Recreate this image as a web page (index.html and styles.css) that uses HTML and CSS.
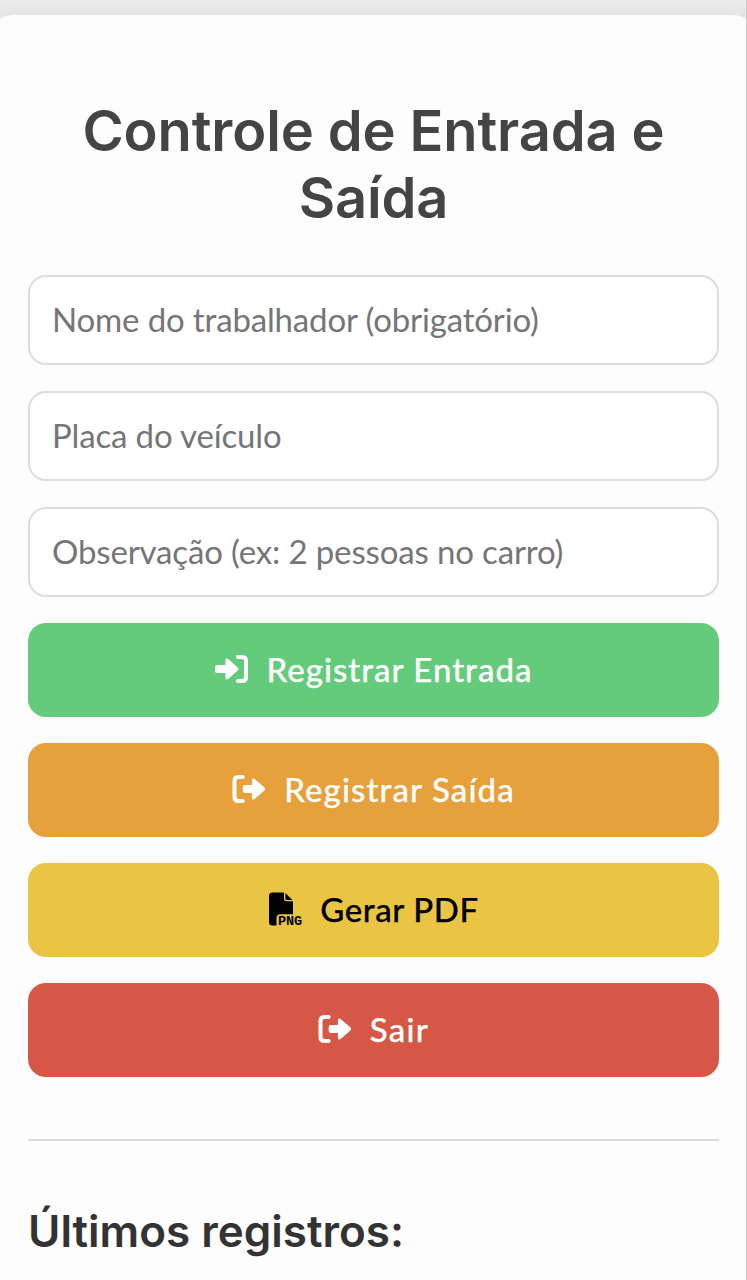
FILE: index.html
```html
<!DOCTYPE html>
<html lang="pt-BR">
<head>
<meta charset="utf-8">
<title>Controle de Entrada e Saída</title>
<link rel="stylesheet" href="styles.css">
</head>
<body>
<svg width="0" height="0" class="sprite">
  <symbol id="leave" viewBox="0 0 34 32">
    <path class="bracket" d="M10.7 4H6.5Q2.5 4 2.5 8V24Q2.5 28 6.5 28H10.7"/>
    <path class="arrow" d="M13 12.6H20.5V7.6Q20.5 5 22.8 7L31.8 14.8Q33.2 16 31.8 17.2L22.8 25Q20.5 27 20.5 24.4V19.4H13Q11.3 19.4 11.3 17.7V14.3Q11.3 12.6 13 12.6Z"/>
  </symbol>
</svg>
<main class="card">
  <h1 class="title">Controle de Entrada e Saída</h1>
  <form class="form">
    <input class="field name" type="text" placeholder="Nome do trabalhador (obrigatório)">
    <input class="field plate" type="text" placeholder="Placa do veículo">
    <input class="field note" type="text" placeholder="Observação (ex: 2 pessoas no carro)">
    <button class="btn enter" type="button">
      <svg class="icon" viewBox="0 0 34 32"><path class="bracket" d="M23 4H27Q31 4 31 8V24Q31 28 27 28H23"/><path class="arrow" d="M2.3 12.6H11V7.6Q11 5 13.3 7L22 14.8Q23.4 16 22 17.2L13.3 25Q11 27 11 24.4V19.4H2.3Q.6 19.4 .6 17.7V14.3Q.6 12.6 2.3 12.6Z"/></svg>
      <span>Registrar Entrada</span>
    </button>
    <button class="btn exit" type="button">
      <svg class="icon"><use href="#leave"/></svg>
      <span>Registrar Saída</span>
    </button>
    <button class="btn pdf" type="button">
      <svg class="icon file" viewBox="0 0 34 34"><path d="M4.5 .5H16V7Q16 9.3 18.4 9.3H25V22.2H12.5Q8.5 22.2 8.5 26.2V33.5H4.5Q1 33.5 1 30V4Q1 .5 4.5 .5ZM17.4 1L24.4 7.9H18.6Q17.4 7.9 17.4 6.5Z"/><text class="filetype" x="10" y="33" textLength="24" lengthAdjust="spacing">PNG</text></svg>
      <span>Gerar PDF</span>
    </button>
    <button class="btn quit" type="button">
      <svg class="icon"><use href="#leave"/></svg>
      <span>Sair</span>
    </button>
  </form>
  <hr class="rule">
  <h2 class="subtitle">Últimos registros:</h2>
</main>
</body>
</html>
```
FILE: styles.css
```css
* { box-sizing: border-box; }
html { background: #e8e8e8; }
body { margin: 0; height: 1280px; overflow: hidden; padding-top: 15px; background: linear-gradient(#ececec, #e5e5e5 15px); border-right: 1px solid #c8c8c8; font-family: Inter, sans-serif; }
.sprite { position: absolute; }
.card { height: 1265px; padding: 83px 27px 0 28px; border-radius: 16px 16px 0 0 / 5px 5px 0 0; background: #fdfdfd; }
.title { margin: 0 0 43px; color: #444; font-size: 56px; font-weight: 600; line-height: 67px; letter-spacing: -.12px; text-align: center; }
.form { display: flex; flex-direction: column; }
.field { height: 90px; margin: 0 0 26px; padding: 0 22px 2px; border: 2px solid #ddd; border-radius: 18px; background: #fff; font-family: Lato, sans-serif; font-size: 33px; letter-spacing: -.15px; outline: 0; }
.field::placeholder { color: #757575; opacity: 1; }
.btn { display: flex; align-items: center; justify-content: center; gap: 18px; height: 94px; margin: 0 0 26px; padding: 0 0 2px; border: 0; border-radius: 18px; color: #fff; font-family: Lato, sans-serif; font-size: 33px; font-weight: 500; letter-spacing: 1px; -webkit-text-stroke: .25px currentColor; }
.icon { width: 34px; height: 32px; fill: currentColor; }
.file { height: 34px; overflow: visible; }
.bracket { fill: none; stroke: currentColor; stroke-width: 4; stroke-linecap: round; }
.arrow { stroke: currentColor; stroke-width: 1.2; stroke-linejoin: round; }
.filetype { font: 700 13.5px "Liberation Mono", monospace; letter-spacing: 0; }
.enter { background: #65cb7c; }
.exit { background: #e6a03c; letter-spacing: 1.1px; }
.pdf { background: #eac443; color: #000; letter-spacing: .6px; }
.quit { background: #d65745; letter-spacing: 1.3px; }
.rule { width: 100%; height: 2px; margin: 36px 0 63px; border: 0; background: #ddd; }
.subtitle { margin: 0; color: #333; font-size: 44px; font-weight: 600; line-height: 54px; }
```
